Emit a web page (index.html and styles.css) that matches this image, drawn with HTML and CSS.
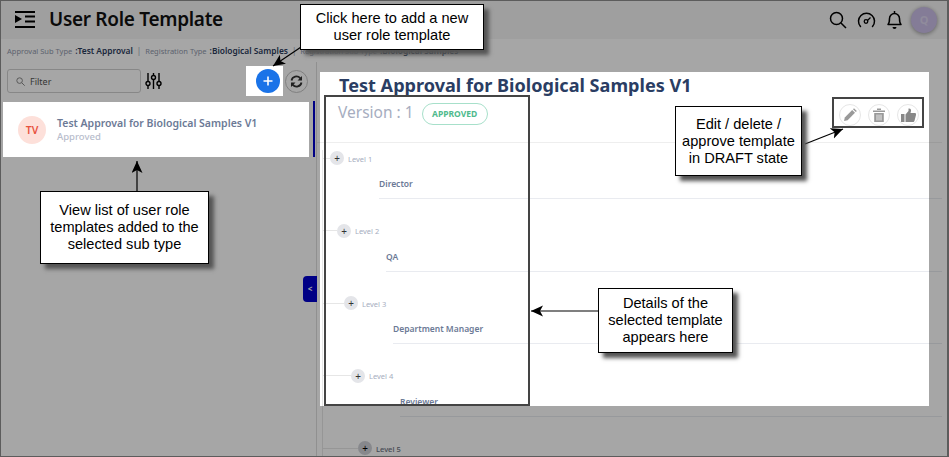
FILE: index.html
```html
<!DOCTYPE html>
<html lang="en">
<head>
<meta charset="utf-8">
<title>User Role Template</title>
<link rel="stylesheet" href="styles.css">
</head>
<body>
<div class="shot">
  <header class="topbar">
    <svg class="menu-icon" width="22" height="20" viewBox="0 0 22 20"><path d="M1 2h20M11 6.500h10M11 11.500h10M1 17h20" stroke="#000" stroke-width="1.800" fill="none"/><path d="M1 5v8l7-4z" fill="#000"/></svg>
    <h1 class="page-title">User Role Template</h1>
    <div class="top-icons">
      <svg width="18" height="18" viewBox="0 0 18 18"><circle cx="7.500" cy="7.500" r="6" fill="none" stroke="#000" stroke-width="1.500"/><path d="M12 12l5 5" stroke="#000" stroke-width="1.500"/></svg>
      <svg width="19" height="16" viewBox="0 0 19 16"><path d="M3.500 14.500a8 8 0 1 1 12 0" fill="none" stroke="#000" stroke-width="1.500" stroke-linecap="round"/><circle cx="9" cy="9.500" r="1.800" fill="none" stroke="#000" stroke-width="1.300"/><path d="M10.500 8.500l3-3" stroke="#000" stroke-width="1.300"/></svg>
      <svg width="17" height="20" viewBox="0 0 17 20"><path d="M2 14.500c1.500-1.500 1.500-3 1.500-6a5 5 0 0 1 10 0c0 3 0 4.500 1.500 6z" fill="none" stroke="#000" stroke-width="1.500" stroke-linejoin="round"/><path d="M8.500 1v2" stroke="#000" stroke-width="1.500"/><path d="M6.500 17h4a2 2 0 0 1-4 0z" fill="#000"/></svg>
      <div class="avatar">Q</div>
    </div>
  </header>

  <nav class="crumbs">
    <span class="crumb-label">Approval Sub Type</span><b class="crumb-value">:Test Approval</b>
    <span class="crumb-sep">|</span>
    <span class="crumb-label">Registration Type</span><b class="crumb-value">:Biological Samples</b>
    <span class="crumb-sep">|</span>
    <span class="crumb-label">Registration Sub Type</span><b class="crumb-value">:Biological Samples</b>
  </nav>

  <main class="main">
    <aside class="side">
      <div class="tools">
        <label class="filter">
          <svg width="9" height="9" viewBox="0 0 9 9"><circle cx="3.600" cy="3.600" r="2.800" fill="none" stroke="#888" stroke-width="1"/><path d="M5.700 5.700l3 3" stroke="#888" stroke-width="1"/></svg>
          <span>Filter</span>
        </label>
        <svg class="sliders" width="17" height="18" viewBox="0 0 17 18"><path d="M3 1v16M8.500 1v16M14 1v16" stroke="#000" stroke-width="1.400"/><circle cx="3" cy="11.500" r="2" fill="#fff" stroke="#000" stroke-width="1.400"/><circle cx="8.500" cy="5.500" r="2" fill="#fff" stroke="#000" stroke-width="1.400"/><circle cx="14" cy="11.500" r="2" fill="#fff" stroke="#000" stroke-width="1.400"/></svg>
        <button class="add-btn"><svg width="10" height="10" viewBox="0 0 10 10"><path d="M5 0.500v9M0.500 5h9" stroke="#fff" stroke-width="1.600"/></svg></button>
        <button class="refresh-btn"><svg width="13" height="13" viewBox="0 0 13 13"><path d="M1.500 5.500a5 5 0 0 1 8.700-2.300L11.500 4.500M11.500 7.500a5 5 0 0 1-8.700 2.300L1.500 8.500" fill="none" stroke="#333" stroke-width="1.800"/><path d="M12 1v4.500H7.500zM1 12V7.500h4.500z" fill="#333"/></svg></button>
      </div>
      <div class="item-row">
        <article class="item">
          <div class="item-avatar">TV</div>
          <div class="item-text">
            <div class="item-title">Test Approval for Biological Samples V1</div>
            <div class="item-status">Approved</div>
          </div>
        </article>
        <div class="item-bar"></div>
      </div>
    </aside>

    <section class="detail">
      <h2 class="detail-title">Test Approval for Biological Samples V1</h2>
      <div class="meta">
        <span class="version">Version : 1</span>
        <span class="badge">APPROVED</span>
        <div class="actions">
          <button class="action"><svg width="14" height="14" viewBox="0 0 14 14"><path d="M1 13l.8-3.600 7.400-7.400 2.800 2.800-7.400 7.400z" fill="#999"/><path d="M10 1.200l1-1 2.800 2.800-1 1z" fill="#999"/></svg></button>
          <button class="action"><svg width="12" height="14" viewBox="0 0 12 14"><path d="M0 2.500h12v1.500H0zM4 .5h4v1.500H4z" fill="#999"/><path d="M1.200 5h9.600v9H1.200z" fill="#999"/><path d="M4 6.500v6M6 6.500v6M8 6.500v6" stroke="#fff" stroke-width=".8"/></svg></button>
          <button class="action"><svg width="15" height="14" viewBox="0 0 15 14"><path d="M0 6h3.500v8H0z" fill="#888"/><path d="M4.500 6.500L7.500 3V.5c1.800-.5 2.800 1 2.500 2.500L9.500 5H14c1 0 1.300 1 1 2l-1.500 5.800c-.2.800-.8 1.200-1.500 1.200H4.500z" fill="#888"/></svg></button>
        </div>
      </div>
      <div class="tree">
        <div class="level l1"><div class="level-head"><i class="conn"></i><span class="node">+</span><span class="level-name">Level 1</span></div><div class="role">Director</div></div>
        <div class="level l2"><div class="level-head"><i class="conn"></i><span class="node">+</span><span class="level-name">Level 2</span></div><div class="role">QA</div></div>
        <div class="level l3"><div class="level-head"><i class="conn"></i><span class="node">+</span><span class="level-name">Level 3</span></div><div class="role">Department Manager</div></div>
        <div class="level l4"><div class="level-head"><i class="conn"></i><span class="node">+</span><span class="level-name">Level 4</span></div><div class="role">Reviewer</div></div>
        <div class="level l5"><div class="level-head"><i class="conn"></i><span class="node">+</span><span class="level-name">Level 5</span></div></div>
      </div>
    </section>
  </main>

  <button class="collapse-tab">&lt;</button>

  <div class="dim"></div>

  <div class="mark mark-details"></div>
  <div class="mark mark-actions"></div>

  <svg class="arrows" width="949" height="457" viewBox="0 0 949 457">
    <defs>
      <marker id="head" markerUnits="userSpaceOnUse" markerWidth="14" markerHeight="12" refX="12" refY="5.500" orient="auto">
        <path d="M0 0L12 5.500 0 11 3 5.500z" fill="#000"/>
      </marker>
    </defs>
    <path d="M307 43L273 66" class="arrow" marker-end="url(#head)"/>
    <path d="M805 144L843 129" class="arrow" marker-end="url(#head)"/>
    <path d="M137 191V161" class="arrow" marker-end="url(#head)"/>
    <path d="M598 311H531" class="arrow" marker-end="url(#head)"/>
  </svg>

  <div class="note note-add">Click here to add a new<br>user role template</div>
  <div class="note note-actions">Edit / delete /<br>approve template<br>in DRAFT state</div>
  <div class="note note-list">View list of user role<br>templates added to the<br>selected sub type</div>
  <div class="note note-details">Details of the<br>selected template<br>appears here</div>
</div>
</body>
</html>
```

FILE: styles.css
```css
* { box-sizing: border-box; }
html, body { margin: 0; padding: 0; }
body { background: #fff; font-family: "Noto Sans", sans-serif; }
button { padding: 0; border: 0; background: none; font: inherit; }

.shot { position: relative; width: 949px; height: 457px; overflow: hidden; background: #fff; }
.shot::after { content: ""; position: absolute; inset: 0; border: 1px solid #5c5c5c; border-right-width: 2px; z-index: 5; }

.topbar { display: flex; align-items: center; height: 39px; padding: 0 12px 0 14px; background: #f5f5f5; }
.menu-icon { flex: none; }
.page-title { margin: 0 0 0 13px; font-size: 19px; letter-spacing: -.3px; line-height: 39px; font-weight: 600; color: #111; }
.top-icons { display: flex; align-items: center; gap: 10px; margin-left: auto; }
.avatar { width: 26px; height: 26px; margin-left: -2px; border-radius: 50%; background: #cbbfe8; color: #ddd6f0; font-size: 11px; font-weight: 700; line-height: 26px; text-align: center; box-shadow: 0 1px 4px rgba(0,0,0,.4); }

.crumbs { display: flex; align-items: center; height: 23px; padding-left: 7px; white-space: nowrap; }
.crumb-label { font-size: 7.500px; color: #8f98ab; }
.crumb-value { margin-left: 3px; font-size: 8.400px; color: #2c3c5c; font-weight: 600; }
.crumb-sep { margin: 0 4px; font-size: 8px; color: #9aa3b5; }

.main { display: flex; height: 395px; }
.side { flex: none; width: 317px; padding-left: 3px; border-right: 1px solid #ddd; }
.tools { display: flex; align-items: center; height: 40px; padding: 0 8.500px 2px 4px; }
.filter { display: flex; align-items: center; gap: 5px; width: 134px; height: 24px; padding-left: 8px; border: 1px solid #d0d0d0; border-radius: 3px; font-size: 9px; color: #555; }
.sliders { margin-left: 4px; }
.add-btn { display: flex; align-items: center; justify-content: center; width: 24px; height: 24px; margin-left: auto; border-radius: 50%; background: #1a73e8; }
.refresh-btn { display: flex; align-items: center; justify-content: center; width: 23px; height: 23px; margin-left: 5px; border: 1px solid #c4c4c4; border-radius: 50%; }

.item-row { display: flex; }
.item { display: flex; align-items: center; gap: 11px; width: 306px; height: 55px; padding-left: 15px; background: #fff; }
.item-avatar { width: 28px; height: 28px; border-radius: 50%; background: #fde0da; color: #e8533f; font-size: 10.500px; font-weight: 600; line-height: 28px; text-align: center; }
.item-title { font-size: 10.500px; line-height: 13px; font-weight: 600; color: #6c7a96; }
.item-status { font-size: 9.500px; line-height: 13px; font-weight: 500; color: #b8bdcc; }
.item-bar { width: 2px; height: 56px; margin: -1px 0 0 4px; background: #0000cc; }

.detail { flex: 1; min-width: 0; padding: 10px 7px 0 0; }
.detail-title { margin: 0; padding-left: 22px; font-size: 18.100px; line-height: 26px; font-weight: 700; color: #2a3d63; white-space: nowrap; }
.meta { display: flex; align-items: flex-start; height: 45px; padding: 3px 23px 0 21px; border-bottom: 1px solid #eee; }
.version { font-size: 15.500px; line-height: 22px; color: #a6adc0; }
.badge { height: 22px; margin: 2px 0 0 8px; padding: 0 9.500px; border: 1.500px solid #a7e0ca; border-radius: 11px; font-size: 8.500px; line-height: 19px; font-weight: 700; color: #4fba8d; }
.actions { display: flex; gap: 7px; margin: 3px 0 0 auto; }
.action { display: flex; align-items: center; justify-content: center; width: 22px; height: 22px; border: 1.500px solid #e6e6e6; border-radius: 50%; }

.tree { margin: 7px 0 0 5px; border-left: 1px solid #e6e6e6; }
.level { height: 72.500px; }
.l1 { --n: 1; } .l2 { --n: 2; } .l3 { --n: 3; } .l4 { --n: 4; } .l5 { --n: 5; }
.level-head { display: flex; align-items: center; height: 16px; }
.conn { width: calc(var(--n) * 7px); height: 1px; background: #e6e6e6; }
.node { width: 14px; height: 14px; border-radius: 50%; background: #e4e5e9; color: #333; font-size: 10px; line-height: 14px; text-align: center; }
.level-name { margin-left: 4px; padding-top: 1px; font-size: 7.500px; color: #a6adc0; }
.l5 .level-name { color: #6a7080; font-weight: 500; }
.l5 .node { background: #d0d2d8; color: #000; }
.role { height: 33px; margin-left: calc(49px + var(--n) * 7px); padding-top: 11px; border-bottom: 1px solid #e9ebf0; font-size: 8.500px; line-height: 14px; font-weight: 600; color: #6c7a96; }

.collapse-tab { position: absolute; left: 303px; top: 276px; width: 14px; height: 26px; border-radius: 4px 0 0 4px; background: #0000cc; color: #fff; font-size: 8px; font-weight: 700; line-height: 26px; text-align: center; }

.dim { position: absolute; inset: 0; background: rgba(0,0,0,.35); clip-path: path(evenodd, "M0 0H949V457H0Z M3 102H309V157H3Z M246 66H283V96H246Z M320 72H929V406H320Z"); }

.mark { position: absolute; border: 2.500px solid #444; }
.mark-details { left: 324px; top: 95px; width: 206px; height: 311px; }
.mark-actions { left: 832px; top: 97px; width: 92px; height: 31px; }

.arrows { position: absolute; left: 0; top: 0; }
.arrow { fill: none; stroke: #000; stroke-width: 1.200; }

.note { position: absolute; display: flex; align-items: center; justify-content: center; border: 1px solid #000; background: #fff; box-shadow: 5px 5px 4px #555; font-family: "Liberation Sans", Arial, sans-serif; font-size: 14.600px; line-height: 17px; color: #000; text-align: center; }
.note-add { left: 300px; top: 4px; width: 184px; height: 46px; }
.note-actions { left: 675px; top: 106px; width: 127px; height: 70px; }
.note-list { left: 40px; top: 191px; width: 169px; height: 73px; }
.note-details { left: 598px; top: 288px; width: 135px; height: 65px; }
```
